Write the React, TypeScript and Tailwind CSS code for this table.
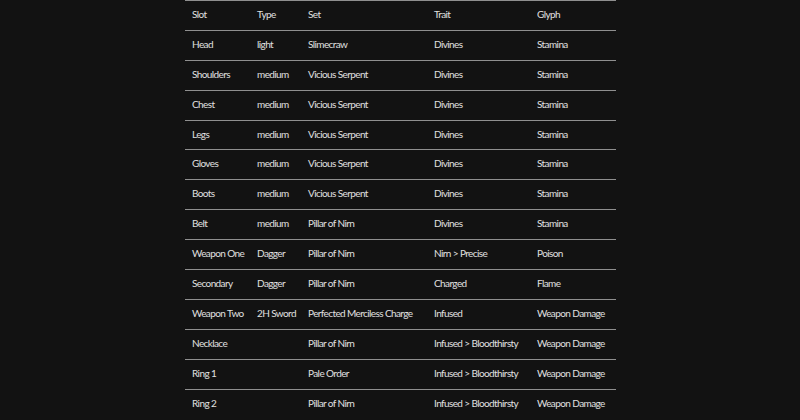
const rows = [
  ['Head', 'light', 'Slimecraw', 'Divines', 'Stamina'],
  ['Shoulders', 'medium', 'Vicious Serpent', 'Divines', 'Stamina'],
  ['Chest', 'medium', 'Vicious Serpent', 'Divines', 'Stamina'],
  ['Legs', 'medium', 'Vicious Serpent', 'Divines', 'Stamina'],
  ['Gloves', 'medium', 'Vicious Serpent', 'Divines', 'Stamina'],
  ['Boots', 'medium', 'Vicious Serpent', 'Divines', 'Stamina'],
  ['Belt', 'medium', 'Pillar of Nirn', 'Divines', 'Stamina'],
  ['Weapon One', 'Dagger', 'Pillar of Nirn', 'Nirn > Precise', 'Poison'],
  ['Secondary', 'Dagger', 'Pillar of Nirn', 'Charged', 'Flame'],
  ['Weapon Two', '2H Sword', 'Perfected Merciless Charge', 'Infused', 'Weapon Damage'],
  ['Necklace', '', 'Pillar of Nirn', 'Infused > Bloodthirsty', 'Weapon Damage'],
  ['Ring 1', '', 'Pale Order', 'Infused > Bloodthirsty', 'Weapon Damage'],
  ['Ring 2', '', 'Pillar of Nirn', 'Infused > Bloodthirsty', 'Weapon Damage'],
]

const widths = ['w-[65px]', 'w-[51px]', 'w-[126px]', 'w-[103px]', 'w-[86px]']

export default function App() {
  return (
    <div className="w-[800px] h-[420px] overflow-hidden bg-[#121212] font-['Lato',sans-serif] text-[10px] tracking-[-0.6px] text-[#e0e0e0]">
      <table className="ml-[185px] w-[431px] table-fixed border-collapse">
        <thead>
          <tr className="border-t border-[#8f8f8f]">
            {['Slot', 'Type', 'Set', 'Trait', 'Glyph'].map((h, i) => (
              <th key={h} className={`${widths[i]} h-[29.9px] px-[7px] pb-[2px] text-left font-normal`}>
                {h}
              </th>
            ))}
          </tr>
        </thead>
        <tbody>
          {rows.map((r) => (
            <tr key={r[0]} className="border-t border-[#8f8f8f]">
              {r.map((c, i) => (
                <td key={i} className="h-[29.9px] px-[7px] pb-[2px] whitespace-nowrap">
                  {c}
                </td>
              ))}
            </tr>
          ))}
        </tbody>
      </table>
    </div>
  )
}
